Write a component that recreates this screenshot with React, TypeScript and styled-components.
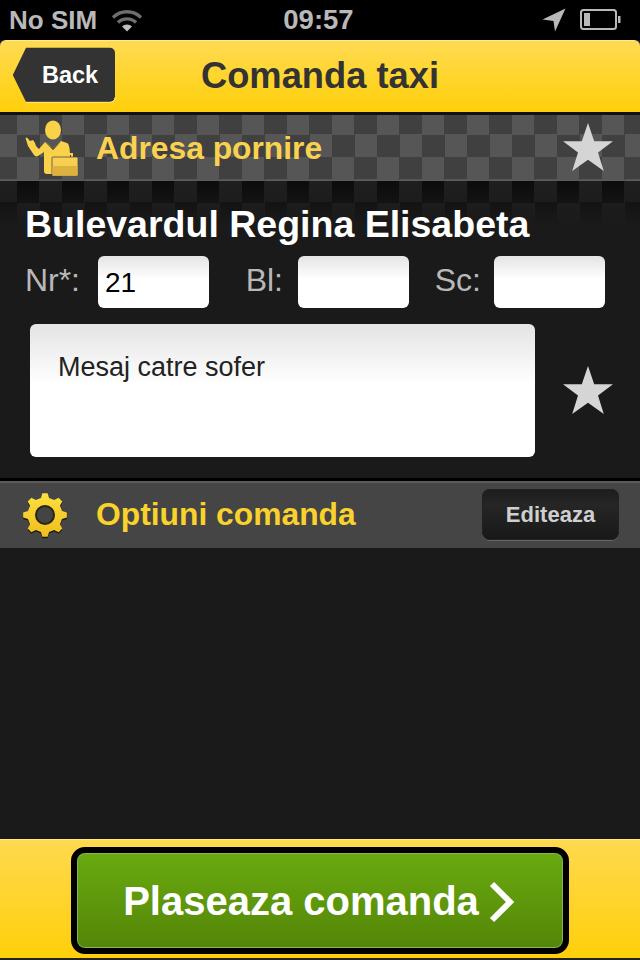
import React from "react";
import styled, { createGlobalStyle } from "styled-components";

const GlobalStyle = createGlobalStyle`
  html, body {
    margin: 0;
    padding: 0;
    background: #000;
  }
  * {
    box-sizing: border-box;
  }
`;

const FONT = `"Liberation Sans", Arial, sans-serif`;

// top-left square of the tile is `b`
const checker = (a: string, b: string, y: number) =>
  `conic-gradient(${a} 25%, ${b} 0 50%, ${a} 0 75%, ${b} 0) 17px ${y}px / 45px 45px`;

const gearPath = (() => {
  const cx = 24;
  const cy = 24;
  const teeth = 8;
  const pts: string[] = [];
  for (let i = 0; i < teeth; i++) {
    const a = (i * Math.PI * 2) / teeth - Math.PI / 2;
    const step = (Math.PI * 2) / teeth;
    const at = (r: number, t: number) =>
      `${(cx + r * Math.cos(t)).toFixed(2)} ${(cy + r * Math.sin(t)).toFixed(2)}`;
    pts.push(at(17.5, a - step * 0.3), at(22, a - step * 0.15), at(22, a + step * 0.15), at(17.5, a + step * 0.3));
  }
  return `M${pts.join("L")}Z`;
})();

const App = () => {
  return (
    <Page>
      <GlobalStyle />
      <StatusBar>
        <StatusGroup>
          <StatusText>No SIM</StatusText>
          <svg width="32" height="24" viewBox="0 0 32 24" fill="none" stroke="#6e6e6e" strokeWidth="3.4">
            <path d="M2 9.5a20 20 0 0 1 28 0" />
            <path d="M7 14.5a13 13 0 0 1 18 0" />
            <path d="M16 23.5l-5-5a7 7 0 0 1 10 0z" fill="#bdbdbd" stroke="none" />
          </svg>
        </StatusGroup>
        <Clock>09:57</Clock>
        <StatusGroup $end>
          <svg width="24" height="24" viewBox="0 0 24 24">
            <path d="M0.5 11.5L23.5 0.5L13 23.5L11.5 13z" fill="#b9b9b9" />
          </svg>
          <svg width="42" height="22" viewBox="0 0 42 22" fill="none">
            <rect x="1" y="1" width="35" height="19" rx="2.5" stroke="#b9b9b9" strokeWidth="2" />
            <rect x="4" y="4" width="6" height="13" fill="#b9b9b9" />
            <path d="M38 7h2.5v7H38z" fill="#b9b9b9" />
          </svg>
        </StatusGroup>
      </StatusBar>

      <NavBar>
        <BackButton>
          <svg width="104" height="56" viewBox="0 0 104 56">
            <path d="M14 0.8H98a5 5 0 0 1 5 5V50a5 5 0 0 1-5 5H14L0.8 28z" fill="#333" />
            <path d="M14 55.3H98a5 5 0 0 0 5-5" fill="none" stroke="#ffe88e" strokeWidth="1" />
          </svg>
          <BackLabel>Back</BackLabel>
        </BackButton>
        <NavTitle>Comanda taxi</NavTitle>
      </NavBar>

      <SectionHead>
        <svg width="54" height="56" viewBox="0 0 54 56">
          <ellipse cx="28" cy="10" rx="8" ry="9.5" fill="#fad24a" />
          <path
            d="M20 22l8 8 8-9 6 2c2 1 3 5 3 14H29a2 2 0 0 0-2 2v15h-5c-2 0-3-1-3-3V32l-6 4c-2 1-3 0-4-1L3 26 0.5 18 2 17.500 5 21l3-1 2 3 1 3 3 3z"
            fill="#fad24a"
          />
          <path d="M22 22.500l6 7.500 7-8" fill="none" stroke="#8a7430" strokeWidth="1" />
          <path d="M33 37v-3h14v3" fill="none" stroke="#fad24a" strokeWidth="2" />
          <rect x="27" y="37" width="26" height="19" rx="1" fill="#f8cf52" stroke="#4a4a4a" strokeWidth="0.8" />
          <rect x="27.500" y="46" width="25" height="9.500" fill="#dcb23c" />
        </svg>
        <AddressTitle>Adresa pornire</AddressTitle>
        <FavStar />
      </SectionHead>

      <AddressBlock>
        <Street>Bulevardul Regina Elisabeta</Street>
        <FieldRow>
          <FieldLabel $gap={18}>Nr*:</FieldLabel>
          <FieldInput defaultValue="21" />
          <FieldLabel $gap={15}>Bl:</FieldLabel>
          <FieldInput />
          <FieldLabel $gap={13}>Sc:</FieldLabel>
          <FieldInput />
        </FieldRow>
        <MessageRow>
          <MessageInput defaultValue="Mesaj catre sofer" />
          <FavStar />
        </MessageRow>
      </AddressBlock>

      <OptionsBar>
        <svg width="48" height="48" viewBox="0 0 48 48">
          <defs>
            <linearGradient id="gearFill" x1="0" y1="0" x2="0" y2="1">
              <stop offset="0" stopColor="#fde03f" />
              <stop offset="1" stopColor="#efbd1c" />
            </linearGradient>
          </defs>
          <path d={gearPath} fill="#1c1a10" transform="translate(0 1.5)" />
          <path d={gearPath} fill="url(#gearFill)" />
          <circle cx="24" cy="24" r="9" fill="#444" stroke="#2a2410" strokeWidth="2" />
        </svg>
        <OptionsTitle>Optiuni comanda</OptionsTitle>
        <EditButton>Editeaza</EditButton>
      </OptionsBar>

      <Spacer />

      <Footer>
        <PlaceButton>
          Plaseaza comanda
          <svg width="26" height="42" viewBox="0 0 26 42" fill="none" stroke="#fff" strokeWidth="6">
            <path d="M3 3l18 18L3 39" />
          </svg>
        </PlaceButton>
      </Footer>
    </Page>
  );
};

export default App;

const Star = ({ className }: { className?: string }) => (
  <svg className={className} width="50" height="50" viewBox="0 0 50 50">
    <path d="M25 0l6.200 18.200H50L35 29.600 40.800 48 25 36.800 9.200 48 15 29.600 0 18.200h18.800z" fill="#d5d5d5" />
  </svg>
);

const Page = styled.div`
  width: 640px;
  height: 960px;
  display: flex;
  flex-direction: column;
  overflow: hidden;
  background: #1a1a1a;
  font-family: ${FONT};
`;

const StatusBar = styled.div`
  height: 40px;
  flex: none;
  display: grid;
  grid-template-columns: 1fr auto 1fr;
  align-items: center;
  padding: 0 18px 0 9px;
  background: #000;
`;

const StatusGroup = styled.div<{ $end?: boolean }>`
  display: flex;
  align-items: center;
  gap: 14px;
  justify-content: ${(p) => (p.$end ? "flex-end" : "flex-start")};
`;

const StatusText = styled.span`
  font-size: 26px;
  font-weight: 700;
  color: #b9b9b9;
`;

const Clock = styled(StatusText)`
  margin-left: 6px;
  font-size: 27.5px;
`;

const NavBar = styled.div`
  height: 75px;
  flex: none;
  display: grid;
  grid-template-columns: 1fr auto 1fr;
  align-items: center;
  padding: 0 12px 3px;
  border-top: 1px solid #ffe88e;
  border-bottom: 3px solid #111;
  border-radius: 6px 6px 0 0;
  background: linear-gradient(#ffdb52, #ffcf0a);
`;

const BackButton = styled.div`
  position: relative;
  width: 104px;
  height: 56px;
  line-height: 0;
`;

const BackLabel = styled.span`
  position: absolute;
  left: 30px;
  top: 29px;
  font-size: 23.5px;
  line-height: 1;
  font-weight: 700;
  color: #fff;
  transform: translateY(-50%);
`;

const NavTitle = styled.div`
  padding-top: 2px;
  font-size: 36.3px;
  font-weight: 700;
  color: #333;
`;

const SectionHead = styled.div`
  height: 66px;
  flex: none;
  display: flex;
  align-items: center;
  padding: 0 27px 0 25px;
  border-bottom: 1px solid #5c5c5c;
  background: ${checker("#404040", "#565656", -3)};
`;

const AddressTitle = styled.div`
  margin: 1px 0 0 17px;
  font-size: 31.8px;
  font-weight: 700;
  color: #fad24f;
`;

const FavStar = styled(Star)`
  flex: none;
  margin-left: auto;
`;

const AddressBlock = styled.div`
  height: 297px;
  flex: none;
  padding: 22px 27px 0 25px;
  background: linear-gradient(rgba(26, 26, 26, 0), #1a1a1a 44px), ${checker("#1f1f1f", "#0c0c0c", -1)};
`;

const Street = styled.div`
  font-size: 37.5px;
  line-height: 42px;
  font-weight: 700;
  color: #fff;
  white-space: nowrap;
`;

const FieldRow = styled.div`
  display: grid;
  grid-template-columns: 73px 111px 89px 111px 85px 111px;
  grid-template-rows: 52px;
  align-items: center;
  margin-top: 11px;
`;

const FieldLabel = styled.span<{ $gap: number }>`
  justify-self: end;
  padding: 0 ${(p) => p.$gap}px 4px 0;
  font-size: 32px;
  color: #b8b8b8;
  white-space: nowrap;
`;

const FieldInput = styled.input`
  width: 111px;
  height: 52px;
  padding: 1px 7px 0;
  border: 0;
  outline: 0;
  border-radius: 6px;
  font-family: ${FONT};
  font-size: 28px;
  color: #000;
  background: linear-gradient(#e4e4e4, #fff 45%);
`;

const MessageRow = styled.div`
  display: flex;
  align-items: center;
  margin-top: 16px;
  padding-left: 5px;
`;

const MessageInput = styled.textarea`
  display: block;
  width: 505px;
  height: 133px;
  padding: 28px 28px 0;
  border: 0;
  outline: 0;
  resize: none;
  overflow: hidden;
  border-radius: 6px;
  font-family: ${FONT};
  font-size: 27px;
  color: #222;
  background: linear-gradient(#e4e4e4, #fff 45%);
`;

const OptionsBar = styled.div`
  height: 70px;
  flex: none;
  display: flex;
  align-items: center;
  padding: 0 21px;
  border-top: 3px solid #000;
  box-shadow: inset 0 2px 0 #5a5a5a;
  background: #454545;
`;

const OptionsTitle = styled.div`
  margin-left: 27px;
  font-size: 31.8px;
  font-weight: 700;
  color: #fad22c;
`;

const EditButton = styled.div`
  margin-left: auto;
  width: 137px;
  height: 51px;
  display: flex;
  align-items: center;
  justify-content: center;
  border-radius: 8px;
  font-size: 22px;
  font-weight: 700;
  color: #cfcfcf;
  background: linear-gradient(#1c1c1c, #262626 30%, #181818);
  box-shadow: 0 1px 0 #666, inset 0 0 0 1px #222;
`;

const Spacer = styled.div`
  flex: 1;
`;

const Footer = styled.div`
  height: 121px;
  flex: none;
  padding: 7px 0 5px;
  display: flex;
  justify-content: center;
  border-top: 1px solid #ffe88e;
  border-bottom: 2px solid #222;
  background: linear-gradient(#ffd94f, #ffcf0a);
`;

const PlaceButton = styled.div`
  width: 498px;
  height: 107px;
  display: flex;
  align-items: center;
  justify-content: center;
  gap: 10px;
  padding: 2px 2px 0 0;
  border: 6px solid #000;
  border-radius: 14px;
  font-size: 40px;
  font-weight: 700;
  color: #fff;
  background: linear-gradient(#69aa10, #548508);
  box-shadow: inset 0 0 0 1px #8cb25a;
`;
